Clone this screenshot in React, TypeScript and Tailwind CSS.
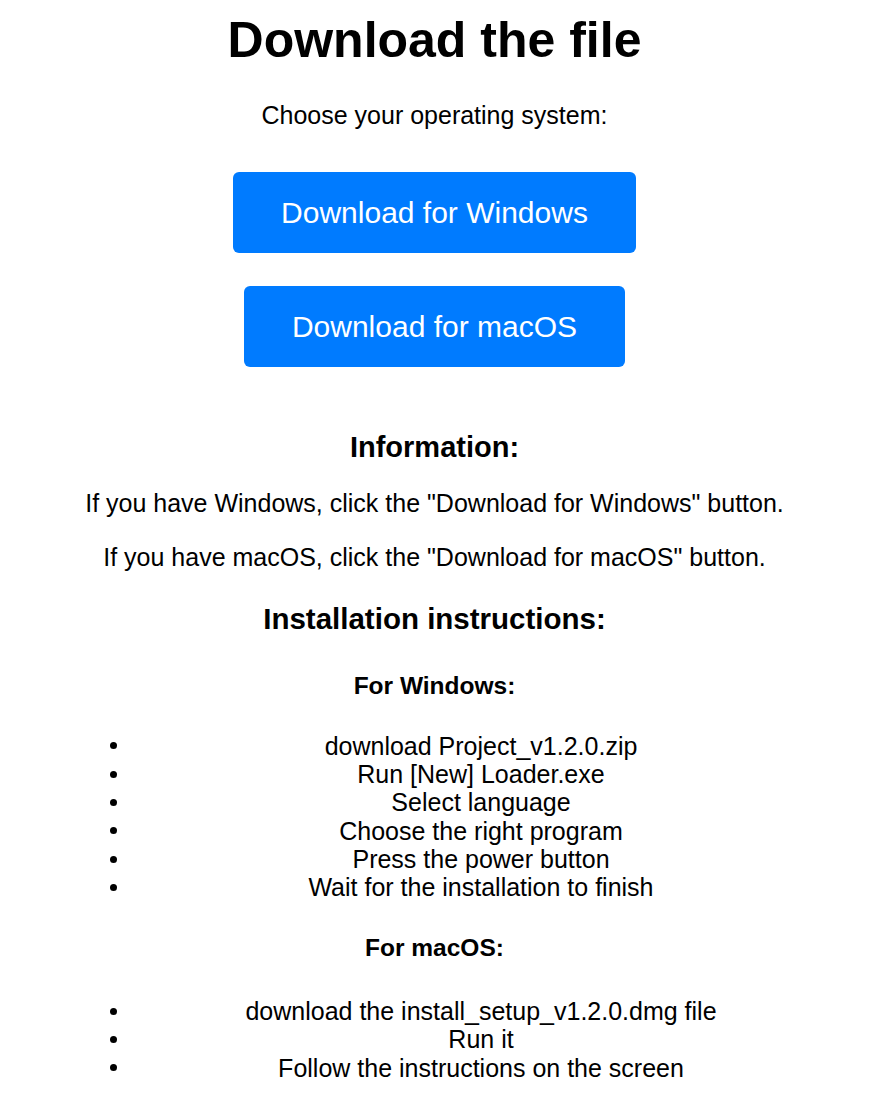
const windowsSteps = [
  "download Project_v1.2.0.zip",
  "Run [New] Loader.exe",
  "Select language",
  "Choose the right program",
  "Press the power button",
  "Wait for the installation to finish",
];

const macSteps = [
  "download the install_setup_v1.2.0.dmg file",
  "Run it",
  "Follow the instructions on the screen",
];

function Steps({ items }: { items: string[] }) {
  return (
    <ul className="w-[869px]">
      {items.map((s) => (
        <li key={s} className="flex h-[28.4px] items-center pl-[110px] pr-[24px] text-[25px] leading-[28.4px]">
          <span className="h-[7px] w-[7px] shrink-0 rounded-full bg-black" />
          <span className="flex-1 text-center">{s}</span>
        </li>
      ))}
    </ul>
  );
}

function DownloadButton({ label }: { label: string }) {
  return (
    <button className="flex h-[81px] items-center rounded-[6px] bg-[#007bff] px-[48px] text-[30px] leading-[34px] text-white">
      {label}
    </button>
  );
}

export default function App() {
  return (
    <div
      className="flex min-h-[1108px] w-[869px] flex-col items-center bg-white pt-[12px] text-black"
      style={{ fontFamily: '"Liberation Sans", Arial, sans-serif' }}
    >
      <h1 className="text-[50px] font-bold leading-[56px]">Download the file</h1>
      <p className="mt-[32px] text-[25px] leading-[30px]">Choose your operating system:</p>

      <div className="mt-[42px] flex flex-col items-center gap-[33px]">
        <DownloadButton label="Download for Windows" />
        <DownloadButton label="Download for macOS" />
      </div>

      <h2 className="mt-[63px] text-[29px] font-bold leading-[34px]">Information:</h2>
      <p className="mt-[24px] text-[25px] leading-[30px]">
        If you have Windows, click the "Download for Windows" button.
      </p>
      <p className="mt-[24px] text-[25px] leading-[30px]">
        If you have macOS, click the "Download for macOS" button.
      </p>

      <h2 className="mt-[30px] text-[29.5px] font-bold leading-[34px]">Installation instructions:</h2>

      <h3 className="mt-[35px] text-[24.5px] font-bold leading-[29px]">For Windows:</h3>
      <div className="mt-[31.5px]">
        <Steps items={windowsSteps} />
      </div>

      <h3 className="mt-[31px] text-[24.5px] font-bold leading-[29px]">For macOS:</h3>
      <div className="mt-[35px]">
        <Steps items={macSteps} />
      </div>
    </div>
  );
}
